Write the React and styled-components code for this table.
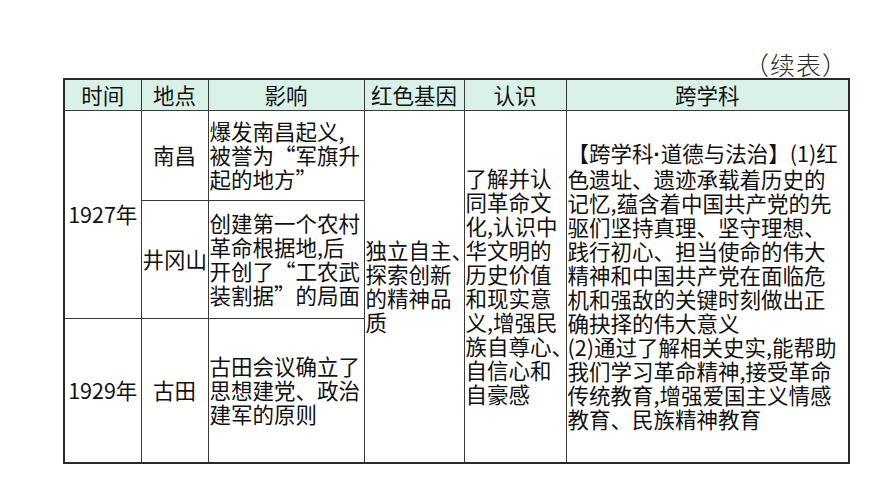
import React from "react";
import styled, { createGlobalStyle } from "styled-components";

const GlobalStyle = createGlobalStyle`
  html, body {
    margin: 0;
    padding: 0;
    background: #ffffff;
  }
`;

const Page = styled.div`
  width: 870px;
  height: 489px;
  box-sizing: border-box;
  padding: 50px 0 0 63px;
  font-family: "Noto Sans CJK SC", "Noto Sans", sans-serif;
  color: #111;
`;

const Caption = styled.div`
  width: 785px;
  height: 28px;
  text-align: right;
  font-size: 25px;
  line-height: 28px;
  color: #2a2a2a;
  font-weight: 300;
  letter-spacing: 1px;
`;

const Table = styled.table`
  width: 785px;
  table-layout: fixed;
  border-collapse: collapse;
  border: 2px solid #2a2a2a;
`;

const Col = styled.col`
  width: ${(p) => p.w}px;
`;

const HeadRow = styled.tr`
  height: 31px;
  background: #d9f1e7;
`;

const Row = styled.tr`
  height: ${(p) => p.h}px;
`;

const Th = styled.th`
  border: 1px solid #3a3a3a;
  font-weight: 400;
  font-size: 21.5px;
  line-height: 24px;
  padding: 0;
  text-align: center;
  vertical-align: middle;
`;

const Td = styled.td`
  border: 1px solid #3a3a3a;
  font-size: 21.5px;
  line-height: 24px;
  padding: 0 1px;
  text-align: ${(p) => (p.center ? "center" : "left")};
  vertical-align: middle;
  white-space: nowrap;
`;

const Dot = styled.span`
  font-family: "Liberation Sans", sans-serif;
  font-weight: 700;
`;

const Lines = ({ lines }) =>
  lines.map((line, i) => (
    <React.Fragment key={i}>
      {line}
      {i < lines.length - 1 && <br />}
    </React.Fragment>
  ));

const widths = [77, 67, 156, 100, 102, 283];
const heads = ["时间", "地点", "影响", "红色基因", "认识", "跨学科"];

const App = () => {
  return (
    <Page>
      <GlobalStyle />
      <Caption>（续表）</Caption>
      <Table>
        <colgroup>
          {widths.map((w, i) => (
            <Col key={i} w={w} />
          ))}
        </colgroup>
        <tbody>
          <HeadRow>
            {heads.map((h) => (
              <Th key={h}>{h}</Th>
            ))}
          </HeadRow>
          <Row h={90}>
            <Td center rowSpan={2}>1927年</Td>
            <Td center>南昌</Td>
            <Td>
              <Lines lines={["爆发南昌起义,", "被誉为“军旗升", "起的地方”"]} />
            </Td>
            <Td rowSpan={3}>
              <Lines lines={["独立自主、", "探索创新", "的精神品", "质"]} />
            </Td>
            <Td rowSpan={3}>
              <Lines
                lines={[
                  "了解并认",
                  "同革命文",
                  "化,认识中",
                  "华文明的",
                  "历史价值",
                  "和现实意",
                  "义,增强民",
                  "族自尊心、",
                  "自信心和",
                  "自豪感",
                ]}
              />
            </Td>
            <Td rowSpan={3}>
              <Lines
                lines={[
                  <>
                    【跨学科<Dot>·</Dot>道德与法治】(1)红
                  </>,
                  "色遗址、遗迹承载着历史的",
                  "记忆,蕴含着中国共产党的先",
                  "驱们坚持真理、坚守理想、",
                  "践行初心、担当使命的伟大",
                  "精神和中国共产党在面临危",
                  "机和强敌的关键时刻做出正",
                  "确抉择的伟大意义",
                  "(2)通过了解相关史实,能帮助",
                  "我们学习革命精神,接受革命",
                  "传统教育,增强爱国主义情感",
                  "教育、民族精神教育",
                ]}
              />
            </Td>
          </Row>
          <Row h={118}>
            <Td center>井冈山</Td>
            <Td>
              <Lines
                lines={["创建第一个农村", "革命根据地,后", "开创了“工农武", "装割据”的局面"]}
              />
            </Td>
          </Row>
          <Row h={145}>
            <Td center>1929年</Td>
            <Td center>古田</Td>
            <Td>
              <Lines lines={["古田会议确立了", "思想建党、政治", "建军的原则"]} />
            </Td>
          </Row>
        </tbody>
      </Table>
    </Page>
  );
};

export default App;
